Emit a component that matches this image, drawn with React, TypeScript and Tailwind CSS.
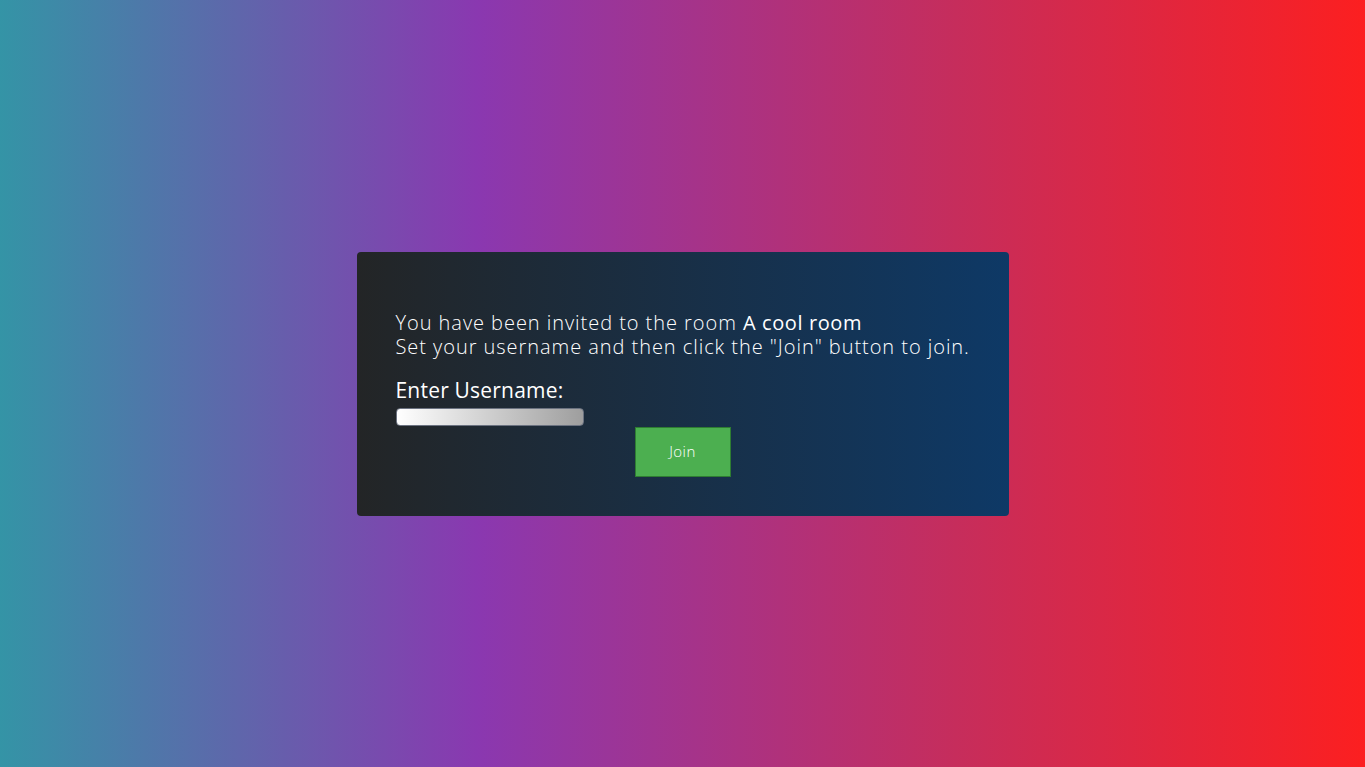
import React from 'react';

export default function App() {
  return (
    <div className="flex min-h-screen w-full items-center justify-center bg-[linear-gradient(to_right,#3494a6_0%,#8a38b0_35%,#c62d5c_70%,#fc1f20_100%)] font-['Open_Sans',sans-serif] text-white">
      <div className="w-[652px] rounded-[4px] bg-[linear-gradient(to_right,#232526,#0e3966)] px-[39px] pb-[39px] pt-[59px]">
        <p className="text-[20px] font-light leading-[24px] tracking-[0.95px] whitespace-nowrap">
          You have been invited to the room <span className="font-medium tracking-[0.6px]">A cool room</span>
          <br />
          Set your username and then click the "Join" button to join.
        </p>
        <label className="mt-[18px] block text-[21px] leading-[26px] tracking-[0.2px]">Enter Username:</label>
        <input
          type="text"
          className="mt-[5px] block h-[18px] w-[188px] rounded-[4px] border border-[#6b7280] bg-[linear-gradient(to_right,#ffffff,#9e9e9e)] outline-none"
        />
        <button
          type="button"
          className="mx-auto mt-[1px] block h-[50px] w-[96px] border border-[#2e7d32] bg-[#4caf50] text-[15px] font-light tracking-[0.5px] text-white"
        >
          Join
        </button>
      </div>
    </div>
  );
}
